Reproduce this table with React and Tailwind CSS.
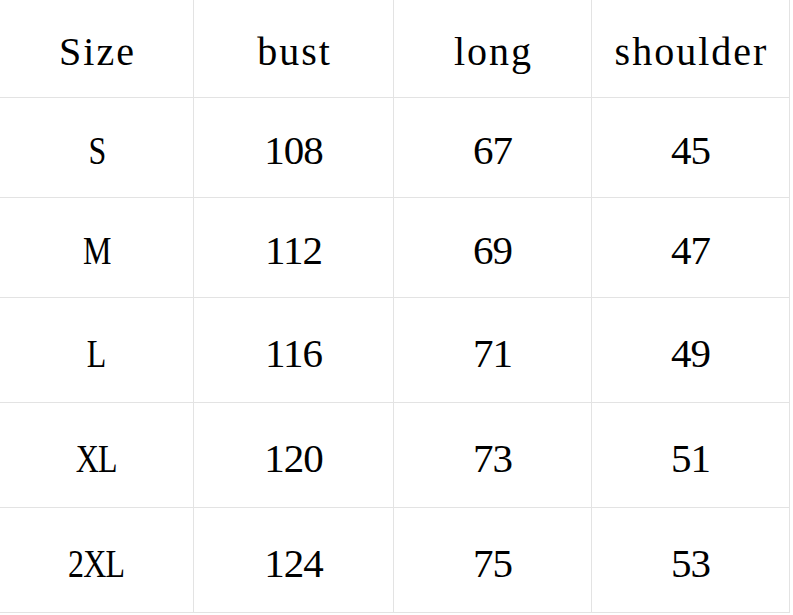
const headers = ['Size', 'bust', 'long', 'shoulder']

const rows = [
  ['S', '108', '67', '45'],
  ['M', '112', '69', '47'],
  ['L', '116', '71', '49'],
  ['XL', '120', '73', '51'],
  ['2XL', '124', '75', '53'],
]

export default function App() {
  return (
    <div className="w-[793px] h-[615px] bg-white overflow-hidden" style={{ fontFamily: '"Liberation Serif", "Noto Sans CJK SC", serif' }}>
      <div className="grid grid-cols-[194px_200px_198px_198px] grid-rows-[98px_100px_100px_105px_105px_105px] text-black">
        {headers.map(h => (
          <div key={h} className="flex items-center justify-center border-r border-b border-[#e3e3e3] pt-[6px] pl-[2px] text-[40px] tracking-[2px]">
            {h}
          </div>
        ))}
        {rows.map(r =>
          r.map((c, i) => (
            <div key={r[0] + i} className="flex items-center justify-center border-r border-b border-[#e3e3e3] pt-[7px] text-[41px] tracking-[-1px]">
              {/* size labels are narrow in the reference */}
              <span className={i === 0 ? 'inline-block scale-x-[0.78]' : ''}>{c}</span>
            </div>
          ))
        )}
      </div>
    </div>
  )
}
